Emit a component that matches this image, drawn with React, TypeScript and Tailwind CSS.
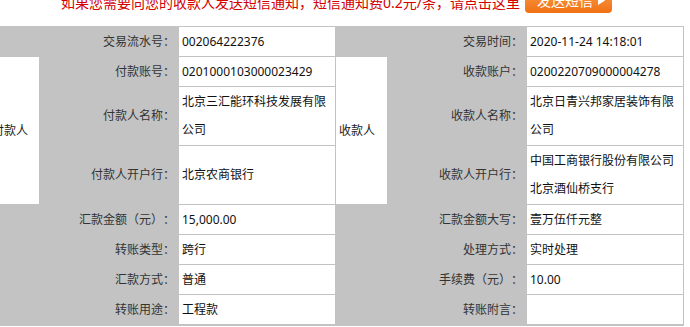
const Label = ({ children, span }: { children: React.ReactNode; span?: boolean }) => (
  <div
    className={`${span ? "col-span-2 " : ""}bg-[#e8e9e8] flex items-center justify-end pr-[3px] text-[#333]`}
  >
    {children}
  </div>
);

const Value = ({ children }: { children?: React.ReactNode }) => (
  <div className="bg-white flex items-center pl-[3px] pr-[3px] leading-[28px] text-[#111]">
    <div>{children}</div>
  </div>
);

const Group = ({ children }: { children: React.ReactNode }) => (
  <div className="row-span-3 bg-white flex items-center pl-[3px] text-[#222]">{children}</div>
);

export default function App() {
  return (
    <div className="w-[690px] h-[327px] overflow-hidden bg-white font-['Noto_Sans','Noto_Sans_CJK_SC',sans-serif] text-[12px] [text-spacing-trim:space-all]">
      <div className="h-[26px] overflow-hidden">
        <div className="flex items-start -mt-[12px] pl-[61px]">
          <span className="mt-[5px] leading-[20px] text-[14px] text-[#d40000] whitespace-nowrap">
            如果您需要向您的收款人发送短信通知，短信通知费0.2元/条，请点击这里
          </span>
          <button className="ml-[5px] h-[25px] w-[87px] rounded-[4px] bg-linear-to-b from-[#fa9d45] to-[#f0700f] text-white text-[14px] flex items-center pl-[12px] gap-[5px]">
            发送短信
            <svg width="7" height="9" viewBox="0 0 7 9">
              <path d="M0 0 L7 4.5 L0 9 Z" fill="white" />
            </svg>
          </button>
        </div>
      </div>
      <div className="-ml-[12px] w-[696px] bg-[#c3c3c3] p-px pb-[2px] grid gap-px grid-cols-[50px_138px_156px_51px_138px_156px] grid-rows-[29px_29px_58px_58px_29px_29px_29px_29px]">
        <Label span>交易流水号：</Label>
        <Value>002064222376</Value>
        <Label span>交易时间：</Label>
        <Value>2020-11-24 14:18:01</Value>

        <Group>付款人</Group>
        <Label>付款账号：</Label>
        <Value>0201000103000023429</Value>
        <Group>收款人</Group>
        <Label>收款账户：</Label>
        <Value>0200220709000004278</Value>

        <Label>付款人名称：</Label>
        <Value>北京三汇能环科技发展有限公司</Value>
        <Label>收款人名称：</Label>
        <Value>北京日青兴邦家居装饰有限公司</Value>

        <Label>付款人开户行：</Label>
        <Value>北京农商银行</Value>
        <Label>收款人开户行：</Label>
        <Value>中国工商银行股份有限公司北京酒仙桥支行</Value>

        <Label span>汇款金额（元）：</Label>
        <Value>15,000.00</Value>
        <Label span>汇款金额大写：</Label>
        <Value>壹万伍仟元整</Value>

        <Label span>转账类型：</Label>
        <Value>跨行</Value>
        <Label span>处理方式：</Label>
        <Value>实时处理</Value>

        <Label span>汇款方式：</Label>
        <Value>普通</Value>
        <Label span>手续费（元）：</Label>
        <Value>10.00</Value>

        <Label span>转账用途：</Label>
        <Value>工程款</Value>
        <Label span>转账附言：</Label>
        <Value />
      </div>
    </div>
  );
}
